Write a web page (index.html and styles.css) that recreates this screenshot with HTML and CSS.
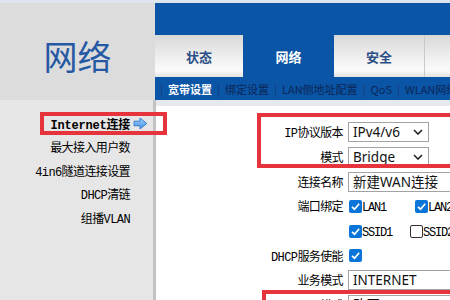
FILE: index.html
```html
<!DOCTYPE html>
<html lang="zh-CN">
<head>
<meta charset="utf-8">
<title>网络 - 宽带设置</title>
<link rel="stylesheet" href="styles.css">
</head>
<body>
<div class="page">
  <div class="topline"></div>
  <header class="header">
    <div class="brand">网络</div>
    <div class="nav">
      <div class="nav-top"></div>
      <div class="tabs">
        <div class="tab">状态</div>
        <div class="tab active">网络</div>
        <div class="tab">安全</div>
        <div class="tab tab-last"></div>
      </div>
      <div class="subnav">
        <span class="sep">|</span>
        <span class="sub current">宽带设置</span>
        <span class="sep">|</span>
        <span class="sub">绑定设置</span>
        <span class="sep">|</span>
        <span class="sub">LAN侧地址配置</span>
        <span class="sep">|</span>
        <span class="sub">QoS</span>
        <span class="sep">|</span>
        <span class="sub">WLAN网络</span>
      </div>
    </div>
  </header>
  <main class="main">
    <aside class="menu">
      <div class="menu-item active"><span>Internet连接</span><span class="menu-icon"><svg width="15" height="13" viewBox="0 0 15 13"><defs><linearGradient id="ag" x1="0" y1="0" x2="0" y2="1"><stop offset="0" stop-color="#a6d4ff"/><stop offset="1" stop-color="#3f8ee0"/></linearGradient></defs><path d="M1 4.2 H7 V1 L13.8 6.5 L7 12 V8.8 H1 Z" fill="url(#ag)" stroke="#3b7fcf" stroke-width="1" stroke-linejoin="round"/></svg></span></div>
      <div class="menu-item"><span>最大接入用户数</span><span class="menu-icon"></span></div>
      <div class="menu-item"><span>4in6隧道连接设置</span><span class="menu-icon"></span></div>
      <div class="menu-item"><span>DHCP清链</span><span class="menu-icon"></span></div>
      <div class="menu-item"><span>组播VLAN</span><span class="menu-icon"></span></div>
    </aside>
    <section class="content">
      <div class="form">
        <div class="label">IP协议版本</div>
        <div class="control"><div class="select"><span>IPv4/v6</span><svg class="chev" width="10" height="6" viewBox="0 0 10 6"><path d="M1 1 L5 5 L9 1" fill="none" stroke="#222" stroke-width="1.6"/></svg></div></div>

        <div class="label">模式</div>
        <div class="control"><div class="select"><span>Bridge</span><svg class="chev" width="10" height="6" viewBox="0 0 10 6"><path d="M1 1 L5 5 L9 1" fill="none" stroke="#222" stroke-width="1.6"/></svg></div></div>

        <div class="label">连接名称</div>
        <div class="control"><div class="input">新建WAN连接</div></div>

        <div class="label">端口绑定</div>
        <div class="control checks">
          <div class="check wide"><span class="box on"><svg width="11" height="11" viewBox="0 0 11 11"><path d="M2 5.8 L4.5 8.2 L9.2 2.8" fill="none" stroke="#fff" stroke-width="1.7"/></svg></span><span class="check-text">LAN1</span></div>
          <div class="check wide"><span class="box on"><svg width="11" height="11" viewBox="0 0 11 11"><path d="M2 5.8 L4.5 8.2 L9.2 2.8" fill="none" stroke="#fff" stroke-width="1.7"/></svg></span><span class="check-text">LAN2</span></div>
        </div>

        <div class="label"></div>
        <div class="control checks">
          <div class="check"><span class="box on"><svg width="11" height="11" viewBox="0 0 11 11"><path d="M2 5.8 L4.5 8.2 L9.2 2.8" fill="none" stroke="#fff" stroke-width="1.7"/></svg></span><span class="check-text">SSID1</span></div>
          <div class="check"><span class="box"></span><span class="check-text">SSID2</span></div>
        </div>

        <div class="label">DHCP服务使能</div>
        <div class="control checks">
          <div class="check"><span class="box on"><svg width="11" height="11" viewBox="0 0 11 11"><path d="M2 5.8 L4.5 8.2 L9.2 2.8" fill="none" stroke="#fff" stroke-width="1.7"/></svg></span></div>
        </div>

        <div class="label">业务模式</div>
        <div class="control"><div class="input">INTERNET</div></div>

        <div class="label">VLAN模式</div>
        <div class="control"><div class="input">改写</div></div>
      </div>
    </section>
  </main>
  <div class="mark mark-menu"></div>
  <div class="mark mark-proto"></div>
  <div class="mark mark-bottom"></div>
</div>
</body>
</html>
```
FILE: styles.css
```css
html, body {
  margin: 0;
  padding: 0;
}
body {
  width: 450px;
  height: 300px;
  overflow: hidden;
  background: #ffffff;
}
.page {
  position: relative;
  width: 450px;
  height: 300px;
  overflow: hidden;
}
.topline {
  height: 3px;
  background: #dde5ee;
}
.header {
  display: grid;
  grid-template-columns: 155px 1fr;
  height: 97px;
}
.brand {
  background: #dcdcdc;
  display: flex;
  align-items: center;
  justify-content: center;
  padding-top: 7px;
  font-family: "Noto Sans CJK SC", sans-serif;
  font-weight: 400;
  font-size: 34px;
  color: #2659a3;
}
.nav {
  background: #0a55a6;
  display: flex;
  flex-direction: column;
  min-width: 0;
  overflow: hidden;
}
.nav-top {
  height: 32px;
}
.tabs {
  display: grid;
  grid-template-columns: 88px 91px 90px 90px;
  height: 42px;
}
.tab {
  display: flex;
  align-items: center;
  justify-content: center;
  background: linear-gradient(#d8d8d8, #f4f4f4 65%, #fafafa 85%, #e2e2e2);
  font-family: "Noto Sans CJK SC", sans-serif;
  font-weight: 700;
  font-size: 13px;
  color: #2b4f86;
}
.tab.active {
  background: transparent;
  color: #ffffff;
}
.tab-last {
  border-left: 1px solid #c9c9c9;
}
.subnav {
  height: 23px;
  display: flex;
  align-items: center;
  gap: 5px;
  padding-left: 5px;
  white-space: nowrap;
  font-family: "Noto Sans CJK SC", sans-serif;
  font-size: 11px;
  color: #0c2656;
}
.sep {
  color: #1b3b74;
}
.sub.current {
  color: #ffffff;
  font-weight: 700;
}
.main {
  display: grid;
  grid-template-columns: 156px 1fr;
  height: 200px;
}
.menu {
  background: #e6e6e6;
  border-right: 3px solid #c2c2c2;
  padding-top: 12px;
  display: flex;
  flex-direction: column;
}
.menu-item {
  height: 23.5px;
  display: flex;
  align-items: center;
  justify-content: flex-end;
  padding-right: 4px;
  font-family: "Liberation Mono", "Noto Sans CJK SC", monospace;
  font-size: 12px;
  letter-spacing: -0.6px;
  color: #000000;
  white-space: nowrap;
}
.menu-item.active {
  font-weight: 700;
  letter-spacing: -0.2px;
}
.menu-icon {
  width: 19px;
  height: 13px;
  display: flex;
  align-items: center;
  padding-left: 3px;
  box-sizing: border-box;
}
.content {
  border-top: 6px solid #e6eaee;
  padding-top: 14px;
  min-width: 0;
  overflow: hidden;
}
.form {
  display: grid;
  grid-template-columns: 187px 1fr;
  grid-auto-rows: 24.7px;
  column-gap: 5px;
  align-items: center;
}
.label {
  text-align: right;
  font-family: "Liberation Mono", "Noto Sans CJK SC", monospace;
  font-size: 12px;
  letter-spacing: -0.6px;
  color: #000000;
  white-space: nowrap;
}
.control {
  display: flex;
  align-items: center;
  min-width: 0;
}
.select, .input {
  box-sizing: border-box;
  height: 20px;
  border: 1px solid #a3a3a3;
  background: #ffffff;
  display: flex;
  align-items: center;
  padding: 0 5px 0 4px;
  font-family: "Noto Sans", "Noto Sans CJK SC", sans-serif;
  font-size: 13.5px;
  line-height: 18px;
  color: #111111;
  white-space: nowrap;
}
.select {
  width: 81px;
  justify-content: space-between;
}
.input {
  width: 140px;
  flex: none;
}
.chev {
  flex: none;
}
.checks {
  padding-left: 1px;
}
.check {
  display: flex;
  align-items: center;
  width: 61px;
  flex: none;
}
.check.wide {
  width: 66px;
}
.box {
  box-sizing: border-box;
  width: 13px;
  height: 13px;
  border-radius: 2px;
  border: 1px solid #333333;
  background: #ffffff;
  display: flex;
  align-items: center;
  justify-content: center;
  flex: none;
}
.box.on {
  border: none;
  background: #0b74d8;
}
.check-text {
  padding-top: 3px;
  font-family: "Liberation Mono", monospace;
  font-size: 12px;
  letter-spacing: -1.2px;
  color: #000000;
}
.mark {
  position: absolute;
  box-sizing: border-box;
  border: 4px solid #e6343c;
  pointer-events: none;
}
.mark-menu {
  left: 40px;
  top: 112px;
  width: 127px;
  height: 23px;
}
.mark-proto {
  left: 257px;
  top: 113px;
  width: 220px;
  height: 55px;
}
.mark-bottom {
  left: 262px;
  top: 290px;
  width: 220px;
  height: 40px;
}
```
